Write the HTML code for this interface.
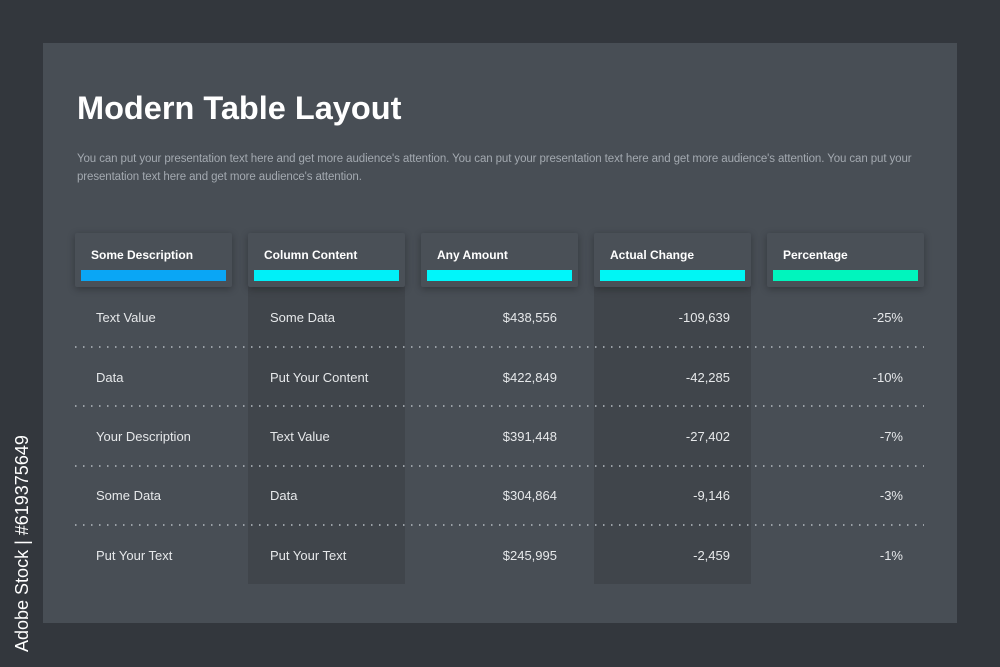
<!DOCTYPE html>
<html><head><style>
body{margin:0;width:1000px;height:667px;background:#33373d;position:relative;overflow:hidden;font-family:"Liberation Sans",sans-serif}
.panel{position:absolute;left:43px;top:43px;width:914px;height:580px;background:#484e55}
h1{position:absolute;left:77px;top:90px;margin:0;font-size:32.5px;font-weight:bold;color:#fff;letter-spacing:0}
.p{position:absolute;left:77px;top:150px;width:850px;font-size:11.5px;line-height:18px;color:#a3a9b0;letter-spacing:-0.1px}
.dark{position:absolute;top:240px;width:157px;height:344px;background:#40454b}
.card{position:absolute;top:233px;width:157px;height:54px;background:#4a5057;border-radius:2px;box-shadow:0 2px 8px rgba(0,0,0,.3)}
.card b{position:absolute;left:16px;top:15px;font-size:12px;color:#fff}
.card i{position:absolute;left:6px;top:37px;width:145px;height:11px}
.c{position:absolute;font-size:13px;color:#e6e8ea}
.r{text-align:right;width:140px}
.line{position:absolute;left:75px;width:849px;height:2px;background:repeating-linear-gradient(90deg,#9aa0a6 0 1.5px,transparent 1.5px 8px)}
.wm{position:absolute;transform:rotate(-90deg);transform-origin:0 0;color:#fff;font-size:18px;white-space:nowrap}
</style></head><body>
<div class="panel"></div>
<h1>Modern Table Layout</h1>
<div class="p">You can put your presentation text here and get more audience's attention. You can put your presentation text here and get more audience's attention. You can put your presentation text here and get more audience's attention.</div>
<div class="dark" style="left:248px"></div>
<div class="dark" style="left:594px"></div>
<div class="card" style="left:75px"><b>Some Description</b><i style="background:#0aa6f5"></i></div>
<div class="card" style="left:248px"><b>Column Content</b><i style="background:#00f0f8"></i></div>
<div class="card" style="left:421px"><b>Any Amount</b><i style="background:#00f6fa"></i></div>
<div class="card" style="left:594px"><b>Actual Change</b><i style="background:#00f6f4"></i></div>
<div class="card" style="left:767px"><b>Percentage</b><i style="background:#00f5bd"></i></div>
<div class="line" style="top:346px"></div>
<div class="line" style="top:405px"></div>
<div class="line" style="top:465px"></div>
<div class="line" style="top:524px"></div>

<div class="c" style="left:96px;top:310px">Text Value</div>
<div class="c" style="left:270px;top:310px">Some Data</div>
<div class="c r" style="left:417px;top:310px">$438,556</div>
<div class="c r" style="left:590px;top:310px">-109,639</div>
<div class="c r" style="left:763px;top:310px">-25%</div>

<div class="c" style="left:96px;top:370px">Data</div>
<div class="c" style="left:270px;top:370px">Put Your Content</div>
<div class="c r" style="left:417px;top:370px">$422,849</div>
<div class="c r" style="left:590px;top:370px">-42,285</div>
<div class="c r" style="left:763px;top:370px">-10%</div>

<div class="c" style="left:96px;top:429px">Your Description</div>
<div class="c" style="left:270px;top:429px">Text Value</div>
<div class="c r" style="left:417px;top:429px">$391,448</div>
<div class="c r" style="left:590px;top:429px">-27,402</div>
<div class="c r" style="left:763px;top:429px">-7%</div>

<div class="c" style="left:96px;top:488px">Some Data</div>
<div class="c" style="left:270px;top:488px">Data</div>
<div class="c r" style="left:417px;top:488px">$304,864</div>
<div class="c r" style="left:590px;top:488px">-9,146</div>
<div class="c r" style="left:763px;top:488px">-3%</div>

<div class="c" style="left:96px;top:548px">Put Your Text</div>
<div class="c" style="left:270px;top:548px">Put Your Text</div>
<div class="c r" style="left:417px;top:548px">$245,995</div>
<div class="c r" style="left:590px;top:548px">-2,459</div>
<div class="c r" style="left:763px;top:548px">-1%</div>

<div class="wm" style="left:12px;top:652px">Adobe Stock | #619375649</div>
</body></html>
